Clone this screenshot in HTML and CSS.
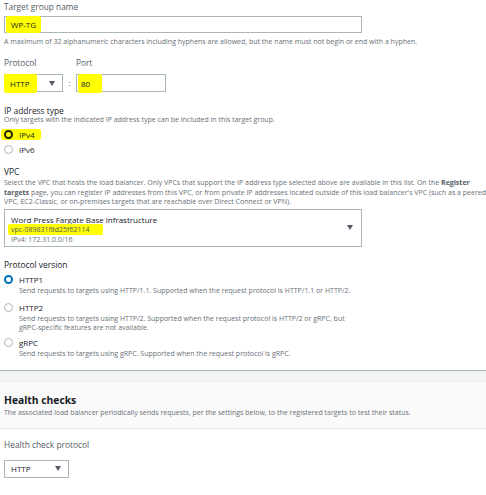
FILE: index.html
```html
<!DOCTYPE html>
<html>
<head>
<meta charset="utf-8">
<link rel="stylesheet" href="styles.css">
</head>
<body>
<div class="form">
  <div class="label l-name">Target group name</div>
  <div class="input wide"><span class="hl hl-name">WP-TG</span></div>
  <div class="help help-name">A maximum of 32 alphanumeric characters including hyphens are allowed, but the name must not begin or end with a hyphen.</div>

  <div class="row proto-row">
    <div class="col">
      <div class="label">Protocol</div>
      <div class="select proto-select"><span class="hl hl-http">HTTP</span><span class="caret"></span></div>
    </div>
    <div class="colon">:</div>
    <div class="col">
      <div class="label">Port</div>
      <div class="input port"><span class="hl hl-port">80</span></div>
    </div>
  </div>

  <div class="label big l-ip">IP address type</div>
  <div class="help">Only targets with the indicated IP address type can be included in this target group.</div>
  <div class="radio r-ipv4"><span class="hl hl-ipv4"><span class="dot sel-dark"></span><span class="rtext">IPv4</span></span></div>
  <div class="radio r-ipv6"><span class="dot"></span><span class="rtext">IPv6</span></div>

  <div class="label big l-vpc">VPC</div>
  <div class="help multi">
    <div class="ln">Select the VPC that hosts the load balancer. Only VPCs that support the IP address type selected above are available in this list. On the <b>Register</b></div>
    <div class="ln"><b>targets</b> page, you can register IP addresses from this VPC, or from private IP addresses located outside of this load balancer's VPC (such as a peered</div>
    <div class="ln">VPC, EC2-Classic, or on-premises targets that are reachable over Direct Connect or VPN).</div>
  </div>
  <div class="select vpc-select">
    <div class="vpc-lines">
      <div class="vpc-name">Word Press Fargate Base infrastructure</div>
      <div class="vpc-id"><span class="hl hl-vpc">vpc-089831f8d25f62114</span></div>
      <div class="vpc-cidr">IPv4: 172.31.0.0/16</div>
    </div>
    <span class="caret"></span>
  </div>

  <div class="label big l-pv">Protocol version</div>
  <div class="opt o1">
    <div class="radio"><span class="dot sel-blue"></span><span class="rtext">HTTP1</span></div>
    <div class="help opt-help">Send requests to targets using HTTP/1.1. Supported when the request protocol is HTTP/1.1 or HTTP/2.</div>
  </div>
  <div class="opt o2">
    <div class="radio"><span class="dot"></span><span class="rtext">HTTP2</span></div>
    <div class="help opt-help multi">
      <div class="ln">Send requests to targets using HTTP/2. Supported when the request protocol is HTTP/2 or gRPC, but</div>
      <div class="ln">gRPC-specific features are not available.</div>
    </div>
  </div>
  <div class="opt o3">
    <div class="radio"><span class="dot"></span><span class="rtext">gRPC</span></div>
    <div class="help opt-help">Send requests to targets using gRPC. Supported when the request protocol is gRPC.</div>
  </div>
</div>

<div class="band"></div>
<div class="panel-head">
  <div class="h2">Health checks</div>
  <div class="help">The associated load balancer periodically sends requests, per the settings below, to the registered targets to test their status.</div>
</div>
<div class="form hc">
  <div class="label l-hc">Health check protocol</div>
  <div class="select hc-select"><span class="stext">HTTP</span><span class="caret"></span></div>
</div>
</body>
</html>
```

FILE: styles.css
```css
* { box-sizing: border-box; }
html, body { margin: 0; padding: 0; background: #fff; }
body {
  font-family: "Open Sans", "Liberation Sans", sans-serif;
  color: #16191f;
  width: 486px;
  height: 495px;
  overflow: hidden;
}
.form { padding-left: 4px; display: flex; flex-direction: column; }
.label { font-size: 8.3px; line-height: 12px; height: 12px; color: #545b64; }
.label.big { font-size: 8.4px; color: #16191f; }
.l-name { margin-top: 1px; }
.help { font-size: 7px; line-height: 10px; color: #687078; white-space: nowrap; }
.help.multi { line-height: 9.5px; }
.help .ln { white-space: nowrap; }
.help b { font-weight: 700; color: #545b64; }
.input, .select {
  border: 1px solid #aab7b8;
  background: #fff;
  display: flex;
  align-items: center;
  font-size: 8px;
  color: #16191f;
}
.input.wide { width: 358px; height: 17px; margin-top: 3px; padding-left: 1px; }
.help-name { margin-top: 4px; }
.hl { background: #ffff00; border-radius: 2px; }
.hl-name { padding: 3px 5px 3px 5px; }
.row { display: flex; align-items: flex-end; }
.proto-row { margin-top: 10px; }
.col { display: flex; flex-direction: column; }
.col .label { margin-bottom: 5px; }
.proto-select { width: 59px; height: 18px; }
.hl-http { padding: 4px 7px 4px 6px; margin-left: -1px; }
.caret {
  width: 0; height: 0;
  border-left: 3.5px solid transparent;
  border-right: 3.5px solid transparent;
  border-top: 5px solid #545b64;
  margin-left: auto;
  margin-right: 7px;
}
.colon { width: 13px; text-align: center; font-size: 8px; line-height: 18px; color: #545b64; }
.port { width: 90px; height: 18px; padding-left: 1px; }
.hl-port { padding: 4px 12px 4px 3px; }
.l-ip { margin-top: 13px; margin-bottom: -2px; }
.radio { display: flex; align-items: center; height: 12px; font-size: 8px; color: #16191f; }
.r-ipv4 { margin-top: 3px; margin-left: -3px; }
.hl-ipv4 { display: flex; align-items: center; padding: 0 6px 0 3px; height: 11px; }
.r-ipv6 { margin-top: 3px; }
.dot {
  width: 9px; height: 9px; border-radius: 50%;
  border: 1px solid #aab7b8; background: #fff;
  flex: none;
}
.dot.sel-dark { border: 2.5px solid #1f2600; background: #ffff00; }
.dot.sel-blue { border: 2.5px solid #0073bb; background: #fff; }
.rtext { margin-left: 6px; }
.l-vpc { margin-top: 11px; }
.vpc-select {
  width: 358px; height: 38px; margin-top: 2px;
  padding: 5px 0 0 6px; align-items: flex-start;
}
.vpc-lines { display: flex; flex-direction: column; }
.vpc-name { font-size: 8px; line-height: 10px; color: #16191f; }
.vpc-id { font-size: 7px; line-height: 10px; color: #545b64; margin-left: -3px; }
.vpc-cidr { font-size: 7px; line-height: 9px; color: #687078; }
.hl-vpc { padding: 1px 14px 1px 3px; }
.vpc-select .caret { margin-right: 8px; align-self: center; margin-top: -5px; }
.l-pv { margin-top: 12px; }
.opt { display: flex; flex-direction: column; }
.o1 { margin-top: 3px; }
.o2 { margin-top: 6px; }
.o3 { margin-top: 5px; }
.opt-help { padding-left: 15px; line-height: 10px; }
.opt-help.multi { line-height: 9px; }
.band {
  margin-top: 11px;
  height: 13px;
  background: #f2f3f3;
  border-top: 1px solid #aab7b8;
}
.panel-head {
  background: #fafafa;
  border-bottom: 1px solid #eaeded;
  padding: 10px 4px 0 4px;
  height: 46px;
}
.h2 { font-size: 10.3px; line-height: 14px; font-weight: 700; color: #16191f; }
.panel-head .help { margin-top: 1px; }
.l-hc { margin-top: 10px; font-size: 8.4px; }
.hc-select { width: 65px; height: 18px; margin-top: 9px; padding-left: 6px; }
.stext { font-size: 8px; }
```
